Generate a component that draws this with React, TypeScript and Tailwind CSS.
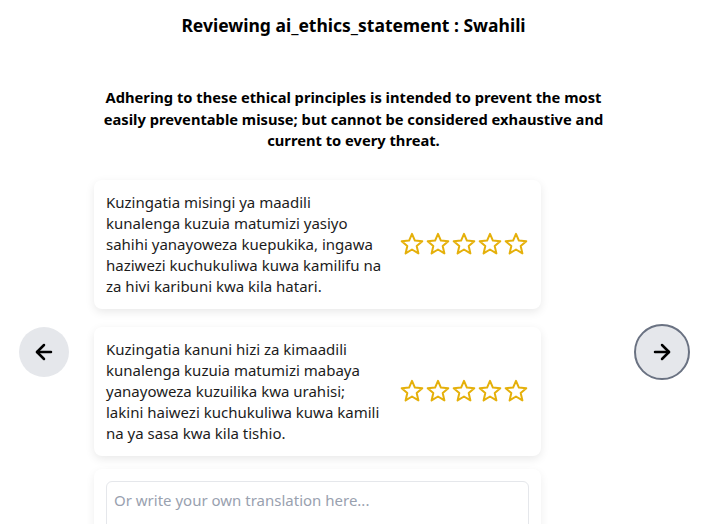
import { ArrowLeft, ArrowRight } from "lucide-react";

const options = [
  "Kuzingatia misingi ya maadili kunalenga kuzuia matumizi yasiyo sahihi yanayoweza kuepukika, ingawa haziwezi kuchukuliwa kuwa kamilifu na za hivi karibuni kwa kila hatari.",
  "Kuzingatia kanuni hizi za kimaadili kunalenga kuzuia matumizi mabaya yanayoweza kuzuilika kwa urahisi; lakini haiwezi kuchukuliwa kuwa kamili na ya sasa kwa kila tishio.",
];

function StarIcon() {
  return (
    <svg width="26" height="24" viewBox="0 0 26 24" fill="none">
      <polygon
        points="13,1.8 15.9,8.6 23.3,9.2 17.7,14.1 19.4,21.4 13,17.5 6.6,21.4 8.3,14.1 2.7,9.2 10.1,8.6"
        stroke="#e5b00a"
        strokeWidth="2"
        strokeLinejoin="round"
      />
    </svg>
  );
}

function Stars() {
  return (
    <div className="flex shrink-0 items-center">
      {[0, 1, 2, 3, 4].map((i) => (
        <StarIcon key={i} />
      ))}
    </div>
  );
}

function OptionCard({ text }: { text: string }) {
  return (
    <div className="flex items-center justify-between rounded-lg bg-white px-3 py-3 shadow-[0_3px_10px_rgba(0,0,0,0.09)]">
      <p className="w-[278px] text-[15px] leading-[21px] text-[#1c1c1c]">{text}</p>
      <Stars />
    </div>
  );
}

export default function App() {
  return (
    <div
      className="h-screen overflow-hidden bg-white text-black"
      style={{ fontFamily: '"Noto Sans", "Open Sans", sans-serif' }}
    >
      <h1 className="pt-[13px] text-center text-[17.5px] font-bold leading-6">
        Reviewing ai_ethics_statement : Swahili
      </h1>

      <p className="mx-auto mt-[50px] w-[516px] text-center text-[14.7px] font-bold leading-[21.5px]">
        Adhering to these ethical principles is intended to prevent the most
        easily preventable misuse; but cannot be considered exhaustive and
        current to every threat.
      </p>

      <div className="mt-[28px] flex items-start pl-[19px] pr-[17px]">
        <button className="mt-[147px] flex h-[50px] w-[50px] shrink-0 items-center justify-center rounded-full bg-gray-200">
          <ArrowLeft size={24} strokeWidth={2.5} className="text-black" />
        </button>

        <div className="ml-[25px] flex w-[447px] flex-col">
          <div className="flex flex-col gap-[18px]">
            {options.map((t) => (
              <OptionCard key={t} text={t} />
            ))}
          </div>
          <div className="mt-[13px] rounded-lg bg-white px-3 pt-[12px] pb-3 shadow-[0_3px_10px_rgba(0,0,0,0.07)]">
            <textarea
              rows={3}
              placeholder="Or write your own translation here..."
              className="block w-full resize-none rounded-md border border-gray-200 px-[7px] py-[8px] text-[15px] leading-[21px] text-[#1c1c1c] placeholder:text-gray-400 focus:outline-none"
            />
          </div>
        </div>

        <button className="mt-[144px] ml-auto flex h-14 w-14 shrink-0 items-center justify-center rounded-full border-2 border-gray-500 bg-gray-200">
          <ArrowRight size={24} strokeWidth={2.5} className="text-black" />
        </button>
      </div>
    </div>
  );
}
